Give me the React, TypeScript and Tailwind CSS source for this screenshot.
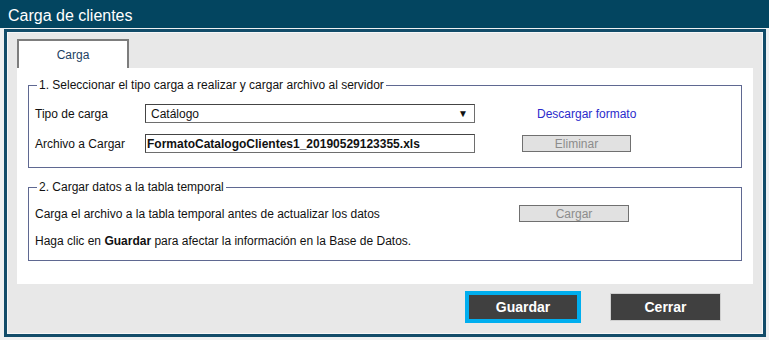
export default function App() {
    return (
        <div className="w-[769px] h-[340px] bg-[#eef0f1] font-['Liberation_Sans',Arial,sans-serif] text-[12px] text-[#111]">
            {/* encabezado */}
            <div className="h-[28px] bg-[#034560] text-white text-[16px] pl-[8px] pt-[3px] flex items-center">
                Carga de clientes
            </div>

            {/* marco */}
            <div className="mt-[1px] ml-[4px] w-[762px] h-[308px] border-[3px] border-[#124c69]">
                <div className="h-full border border-[#f6f7f8] bg-[#e8e8e8] px-[9px] pt-[6px] flex flex-col">
                    {/* pestaña */}
                    <div className="flex">
                        <div className="w-[112px] h-[29px] bg-white border-l-2 border-t-2 border-r-2 border-[#7d7d7d] flex items-center justify-center text-[#1d3f63]">
                            Carga
                        </div>
                    </div>

                    <div className="w-[736px] h-[216px] bg-white px-[11px] pt-[10px] flex flex-col gap-[12px]">
                        {/* 1 */}
                        <fieldset className="border border-[#5f6891] pl-[6px] pr-[6px] pb-[14px]">
                            <legend className="ml-[2px] px-[2px] leading-[14px]">
                                1. Seleccionar el tipo carga a realizar y cargar archivo al servidor
                            </legend>
                            <div className="pt-[12px] flex flex-col gap-[11px]">
                                <div className="flex items-center h-[19px]">
                                    <span className="w-[110px]">Tipo de carga</span>
                                    <div className="w-[330px] h-[19px] border border-[#6e6e6e] border-l-[#444] border-t-[#444] flex items-center justify-between pl-[5px] pr-[6px]">
                                        <span>Catálogo</span>
                                        <span className="text-[10px] leading-none">▼</span>
                                    </div>
                                    <span className="ml-[62px] text-[#2b2bcc]">Descargar formato</span>
                                </div>
                                <div className="flex items-center h-[19px]">
                                    <span className="w-[110px]">Archivo a Cargar</span>
                                    <div className="w-[330px] h-[19px] border border-[#6e6e6e] border-l-[#444] border-t-[#444] flex items-center pl-[1px] font-bold">
                                        FormatoCatalogoClientes1_20190529123355.xls
                                    </div>
                                    <div className="ml-[47px] w-[109px] h-[17px] border border-[#707070] bg-[#e1e1e1] text-[#8c8c8c] flex items-center justify-center">
                                        Eliminar
                                    </div>
                                </div>
                            </div>
                        </fieldset>

                        {/* 2 */}
                        <fieldset className="border border-[#5f6891] pl-[6px] pr-[6px] pb-[11px]">
                            <legend className="ml-[2px] px-[2px] leading-[14px]">
                                2. Cargar datos a la tabla temporal
                            </legend>
                            <div className="pt-[11px] flex flex-col gap-[10px]">
                                <div className="flex items-center h-[17px]">
                                    <span className="w-[484px]">Carga el archivo a la tabla temporal antes de actualizar los datos</span>
                                    <div className="w-[110px] h-[17px] border border-[#707070] bg-[#e1e1e1] text-[#8c8c8c] flex items-center justify-center">
                                        Cargar
                                    </div>
                                </div>
                                <div className="flex items-center h-[17px]">
                                    <span>
                                        Haga clic en <b>Guardar</b> para afectar la información en la Base de Datos.
                                    </span>
                                </div>
                            </div>
                        </fieldset>
                    </div>

                    {/* botones */}
                    <div className="flex justify-end items-center gap-[29px] pr-[32px] mt-[7px]">
                        <button className="w-[116px] h-[32px] border-4 border-[#00aeef] bg-[#404040] text-white text-[14px] font-bold">
                            Guardar
                        </button>
                        <button className="w-[111px] h-[28px] border border-[#cfcfcf] bg-[#404040] text-white text-[14px] font-bold">
                            Cerrar
                        </button>
                    </div>
                </div>
            </div>
        </div>
    );
}
